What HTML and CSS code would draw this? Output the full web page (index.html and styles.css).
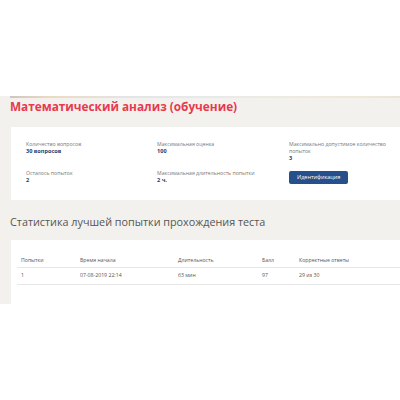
FILE: index.html
```html
<!DOCTYPE html>
<html lang="ru">
<head>
  <meta charset="UTF-8">
  <title>Математический анализ (обучение)</title>
  <link rel="stylesheet" href="styles.css">
</head>
<body>

  <div class="top"></div>

  <div class="page">
    <div class="banner-edge"></div>

    <h1>Математический анализ (обучение)</h1>

    <div class="card info">
      <div class="item">
        <div class="label">Количество вопросов</div>
        <div class="value">30 вопросов</div>
      </div>
      <div class="item">
        <div class="label">Максимальная оценка</div>
        <div class="value">100</div>
      </div>
      <div class="item">
        <div class="label">Максимально допустимое количество<br>попыток</div>
        <div class="value">3</div>
      </div>
      <div class="item">
        <div class="label">Осталось попыток</div>
        <div class="value">2</div>
      </div>
      <div class="item">
        <div class="label">Максимальная длительность попытки</div>
        <div class="value">2 ч.</div>
      </div>
      <div class="item">
        <div class="btn">Идентификация</div>
      </div>
    </div>

    <h2>Статистика лучшей попытки прохождения теста</h2>

    <div class="card stats">
      <table>
        <colgroup>
          <col class="c1"><col class="c2"><col class="c3"><col class="c4"><col>
        </colgroup>
        <tr>
          <th>Попытки</th>
          <th>Время начала</th>
          <th>Длительность</th>
          <th>Балл</th>
          <th>Корректные ответы</th>
        </tr>
        <tr>
          <td>1</td>
          <td>07-08-2019 22:14</td>
          <td>63 мин</td>
          <td>97</td>
          <td>29 из 30</td>
        </tr>
      </table>
    </div>
  </div>

</body>
</html>
```

FILE: styles.css
```css
body {
  margin: 0;
  font-family: 'Open Sans', 'Liberation Sans', sans-serif;
  background: #fff;
  color: #555;
  overflow: hidden;
}

.top {
  height: 96px;
}

.page {
  background: #f2f1ed;
  padding-left: 10px;
}

.banner-edge {
  height: 2px;
  background: linear-gradient(90deg, #b9a7a0, #e8c9a8 10%, #d9dde0 30%, #e2e4ea 50%, #ece6d8 70%, #f0e2cc 90%, #eadccb);
  opacity: 0.6;
}

h1 {
  margin: 0 0 13px;
  font-size: 11.8px;
  line-height: 16px;
  font-weight: 700;
  color: #e8394f;
}

.card {
  background: #fff;
  margin-left: 1px;
}

.info {
  display: grid;
  grid-template-columns: 131px 132px 1fr;
  row-gap: 8px;
  padding: 14px 0 16px 15px;
}

.item {
  font-size: 5.2px;
  line-height: 7px;
}

.label {
  color: #777;
}

.value {
  font-size: 5.6px;
  font-weight: 700;
  color: #2b3e6b;
}

.btn {
  display: inline-block;
  vertical-align: top;
  margin-top: 0.5px;
  padding: 0 8px;
  height: 13px;
  line-height: 13px;
  font-size: 5.5px;
  color: #fff;
  background: #25508c;
  border-radius: 2px;
}

h2 {
  margin: 15px 0 11px;
  font-size: 10.8px;
  line-height: 14px;
  font-weight: 400;
  color: #555;
}

.stats {
  padding: 17px 0 19px 6px;
}

table {
  width: 100%;
  border-collapse: collapse;
  table-layout: fixed;
}

.c1 { width: 59px; }
.c2 { width: 98px; }
.c3 { width: 84px; }
.c4 { width: 37px; }

th, td {
  text-align: left;
  font-size: 5.2px;
  line-height: 7px;
  color: #555;
  padding-left: 4px;
}

th {
  font-weight: 400;
  padding-top: 0;
  padding-bottom: 3px;
  border-bottom: 1px solid #e6e6e6;
}

td {
  padding-top: 4px;
  padding-bottom: 5px;
  border-bottom: 1px solid #e6e6e6;
}
```
